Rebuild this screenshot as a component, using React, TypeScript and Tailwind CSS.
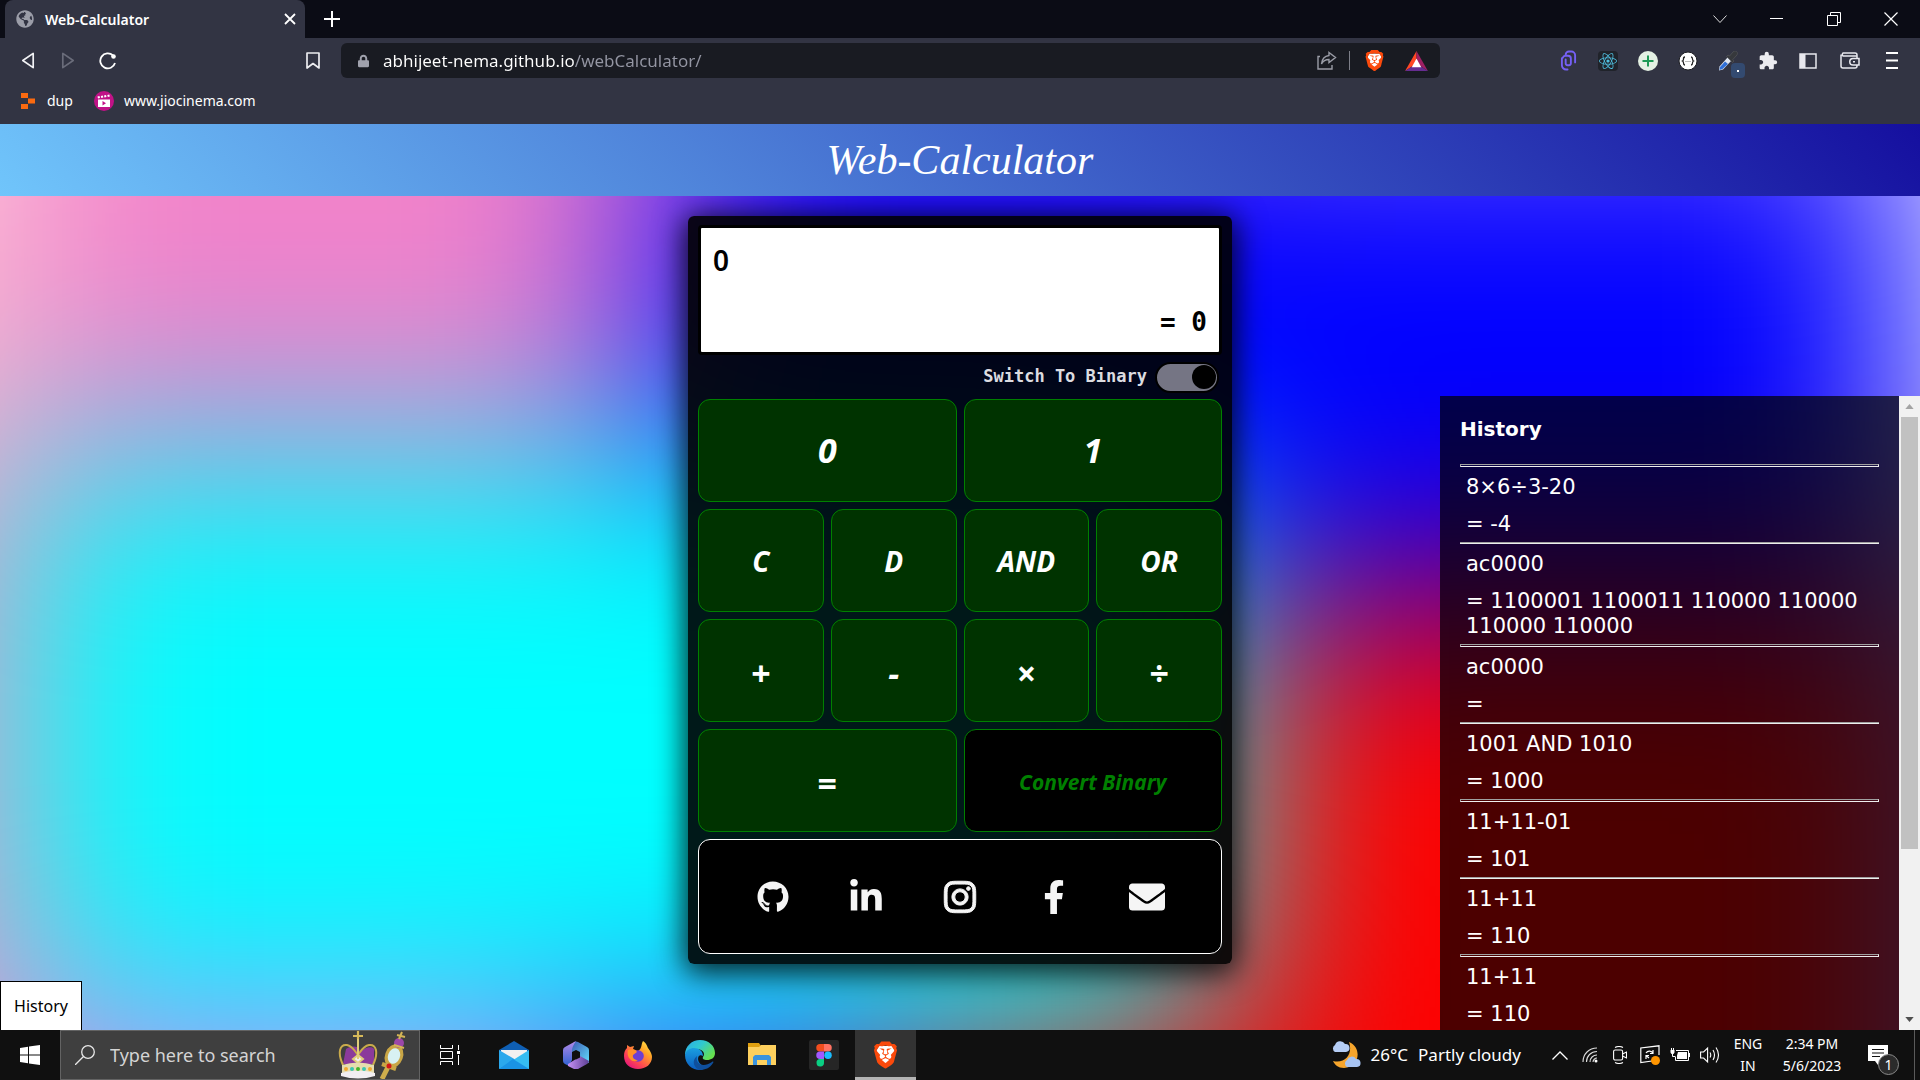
import type { ReactNode } from "react";
import { FaEnvelope, FaFacebookF, FaGithub, FaGlobeAmericas, FaInstagram, FaLinkedinIn, FaLock, FaReact } from "react-icons/fa";
import { MdExtension } from "react-icons/md";
import { SiBrave } from "react-icons/si";

const UI = "font-['Noto_Sans','Open_Sans',sans-serif]";

function IconButton({ label, className, children }: { label: string; className: string; children: ReactNode }) {
  return (
    <button type="button" aria-label={label} className={`flex shrink-0 items-center justify-center ${className}`}>
      {children}
    </button>
  );
}

function BraveLogo({ className }: { className: string }) {
  return (
    <span className={`relative flex items-center justify-center ${className}`}>
      <svg viewBox="0 0 24 24" className="absolute inset-0 h-full w-full">
        <path d="M6 4h12l2 4-3 10-5 4-5-4L4 8z" fill="#fff" />
      </svg>
      <SiBrave className="relative h-full w-full text-[#fb4a0c]" />
    </span>
  );
}

/* ---------- Browser chrome ---------- */

function TitleBar() {
  return (
    <header className="flex h-[38px] shrink-0 items-stretch bg-[#0b0c15] pl-[5px] text-white">
      <div className="flex w-[300px] items-center rounded-t-lg bg-[#323443] pl-[11px] pr-2">
        <FaGlobeAmericas className="h-[18px] w-[18px] text-[#9b9da8]" />
        <h2 className="ml-[11px] flex-1 text-[14px] font-semibold">Web-Calculator</h2>
        <IconButton label="Close tab" className="h-5 w-[14px]">
          <svg viewBox="0 0 12 12" className="h-3 w-3" stroke="#fff" strokeWidth="1.8"><path d="M1 1l10 10M11 1L1 11" /></svg>
        </IconButton>
      </div>
      <IconButton label="New tab" className="w-[54px]">
        <svg viewBox="0 0 16 16" className="h-4 w-4" stroke="#fff" strokeWidth="2"><path d="M8 0v16M0 8h16" /></svg>
      </IconButton>
      <div className="ml-auto flex pr-px">
        <IconButton label="Search tabs" className="w-[57px]">
          <svg viewBox="0 0 14 8" className="h-2 w-[14px]" fill="none" stroke="#ddd"><path d="M.5.5L7 7.500 13.500.5" /></svg>
        </IconButton>
        <IconButton label="Minimize" className="w-[57px]">
          <svg viewBox="0 0 13 2" className="h-[2px] w-[13px]"><path d="M0 0h13v1H0z" fill="#fff" /></svg>
        </IconButton>
        <IconButton label="Restore" className="w-[57px]">
          <svg viewBox="0 0 14 14" className="h-[14px] w-[14px]" fill="none" stroke="#fff"><path d="M.5 3.500h10v10H.5zM3.500 3V.5h10v10H11" /></svg>
        </IconButton>
        <IconButton label="Close" className="w-[57px]">
          <svg viewBox="0 0 14 14" className="h-[14px] w-[14px]" stroke="#fff" strokeWidth="1.200"><path d="M.5.5l13 13M13.500.5l-13 13" /></svg>
        </IconButton>
      </div>
    </header>
  );
}

function Extensions() {
  return (
    <div className="flex pr-2">
      <IconButton label="Clip extension" className="w-10">
        <svg viewBox="0 0 18 22" className="h-[21px] w-[17px]" fill="none" stroke="#7560f5" strokeWidth="2" strokeLinecap="round">
          <path d="M6 5.500V5a3.500 3.500 0 0 1 3.500-3.500H12A4 4 0 0 1 16 5.500V13M3 8a3 3 0 0 1 3-2h2.500a3 3 0 0 1 3 3v5a2 2 0 0 1-2 2h-1.500a2 2 0 0 1-2-2v-4M2 8.500v7.500a4.500 4.500 0 0 0 4.500 4.500H8" />
        </svg>
      </IconButton>
      <IconButton label="React tools" className="w-10">
        <span className="flex h-5 w-5 items-center justify-center rounded-sm bg-[#20232a]"><FaReact className="h-[18px] w-[18px] text-[#4fc0e0]" /></span>
      </IconButton>
      <IconButton label="Add extension" className="w-10">
        <svg viewBox="0 0 20 20" className="h-5 w-5"><circle cx="10" cy="10" r="10" fill="#e4f1e3" /><path d="M10 4.500v11M4.500 10h11" stroke="#1d9a55" strokeWidth="2" /></svg>
      </IconButton>
      <IconButton label="JSON viewer" className="w-10">
        <svg viewBox="0 0 20 20" className="h-5 w-5" fill="none">
          <circle cx="10" cy="10" r="9" fill="#fff" stroke="#1c1d22" />
          <path d="M7 6c-1.500 0-1.500 1-1.500 2s0 1.500-1 2c1 .5 1 1 1 2s0 2 1.500 2M13 6c1.500 0 1.500 1 1.500 2s0 1.500 1 2c-1 .5-1 1-1 2s0 2-1.500 2" stroke="#222" strokeWidth="1.300" />
          <path d="M7.500 10.500h5" stroke="#777" strokeDasharray="1 1" />
        </svg>
      </IconButton>
      <IconButton label="Colour picker" className="relative w-10">
        <svg viewBox="0 0 20 20" className="h-5 w-5">
          <path d="M1 19.500l.5-4L10 6l3.500 3.500L5 18.500z" fill="#dfe6f2" />
          <path d="M1.500 19l.5-3 5-5.500 3 2.500L4.500 18z" fill="#2f6fd8" />
          <path d="M8.500 5.500l6 6 1.500-1.500-1.200-1.500 4.200-4.500c1.500-2.500-1-5-3.500-3.500L11.500 5 10 4z" fill="#36383c" stroke="#5a5a5e" strokeWidth=".6" />
        </svg>
        <span className="absolute left-[23px] top-[25px] flex h-[15px] w-[14px] items-center justify-center rounded-sm bg-[#334a70]"><span className="h-[2px] w-[2px] bg-white" /></span>
      </IconButton>
      <IconButton label="Extensions" className="w-10"><MdExtension className="h-5 w-5 text-[#ececf0]" /></IconButton>
      <IconButton label="Sidebar" className="w-10">
        <svg viewBox="0 0 18 16" className="h-4 w-[18px]"><path d="M1 1h16v14H1z" fill="none" stroke="#e8e8ee" strokeWidth="1.500" /><path d="M1 1h5.500v14H1z" fill="#e8e8ee" /></svg>
      </IconButton>
      <IconButton label="Wallet" className="w-11">
        <svg viewBox="0 0 20 17" className="h-[17px] w-5" fill="none" stroke="#e8e8ee" strokeWidth="1.500">
          <path d="M17 4H3a2 2 0 0 1 0-3h12a2 2 0 0 1 2 2v3M1 2.500V14a2 2 0 0 0 2 2h12a2 2 0 0 0 2-2v-1M3.500 4H17M19 6.500h-6a3.200 3.200 0 0 0 0 6.500h6z" /><path d="M13 9.700h2" />
        </svg>
      </IconButton>
      <IconButton label="Menu" className="w-10">
        <svg viewBox="0 0 12 17" className="h-[17px] w-3" stroke="#fff" strokeWidth="1.800"><path d="M0 1h12M0 8.500H12M0 16h12" /></svg>
      </IconButton>
    </div>
  );
}

function Toolbar() {
  return (
    <nav className="flex h-[45px] shrink-0 items-stretch bg-[#323443] pl-2">
      <IconButton label="Back" className="w-10">
        <svg viewBox="0 0 14 18" className="h-[17px] w-[14px]" fill="none" stroke="#f2f2f5" strokeWidth="1.800" strokeLinejoin="round"><path d="M12.500 1.500v15L1.500 9z" /></svg>
      </IconButton>
      <IconButton label="Forward" className="w-10">
        <svg viewBox="0 0 14 18" className="h-[17px] w-[14px]" fill="none" stroke="#6a6c7a" strokeWidth="1.800" strokeLinejoin="round"><path d="M1.500 1.500v15L12.500 9z" /></svg>
      </IconButton>
      <IconButton label="Reload" className="w-10">
        <svg viewBox="0 0 18 18" className="h-[18px] w-[18px]" fill="none" stroke="#fff" strokeWidth="1.800">
          <path d="M14 3.500A7.500 7.500 0 1 0 16 11" /><circle cx="14.500" cy="4.500" r="2.300" fill="#fff" stroke="none" />
        </svg>
      </IconButton>
      <IconButton label="Bookmark this page" className="ml-[165px] w-10">
        <svg viewBox="0 0 14 17" className="h-[17px] w-[14px]" fill="none" stroke="#ececf0" strokeWidth="1.700" strokeLinejoin="round"><path d="M1 1h12v15l-6-4.500L1 16z" /></svg>
      </IconButton>
      <div className="my-[5px] ml-2 flex flex-1 items-center rounded-md bg-[#191b22] pl-[17px]">
        <FaLock className="h-[14px] w-[11px] text-[#a0a2ad]" />
        <input
          aria-label="Address"
          readOnly
          value="abhijeet-nema.github.io/webCalculator/"
          className="ml-[14px] min-w-0 flex-1 bg-linear-to-r from-white from-[191px] to-[#9496a3] to-[191px] bg-clip-text text-[17px] text-transparent outline-none"
        />
        <IconButton label="Share" className="w-10">
          <svg viewBox="0 0 20 19" className="h-[19px] w-5" fill="none" stroke="#9a9ca6" strokeWidth="1.400">
            <path d="M3 5.500H1v12.500h14v-4M12 1.500l6.500 5L12 11.500V8.500c-3.500 0-6 1.500-7.500 4.500.5-5 3.500-8 7.500-8.500z" />
          </svg>
        </IconButton>
        <span className="ml-[2px] h-[19px] w-px bg-[#7c7e88]" />
        <IconButton label="Brave Shields" className="ml-1 w-10"><BraveLogo className="h-[23px] w-[21px]" /></IconButton>
        <IconButton label="Brave Rewards" className="mr-[2px] w-11">
          <svg viewBox="0 0 24 21" className="h-5 w-[23px]"><path d="M12 0L0 21l12-8z" fill="#ff4724" /><path d="M12 0l12 21-12-8z" fill="#9e1f63" /><path d="M0 21h24l-12-8z" fill="#662d91" /><path d="M12 8l5 9H7z" fill="#fff" /></svg>
        </IconButton>
      </div>
      <div className="ml-[108px] flex"><Extensions /></div>
    </nav>
  );
}

function BookmarkBar() {
  return (
    <nav aria-label="Bookmarks" className="flex h-[41px] shrink-0 items-center bg-[#323443] pb-[6px] pl-[21px] text-[14px] text-white">
      <a href="#dup" className="flex items-center">
        <svg viewBox="0 0 14 16" className="h-4 w-[14px]" fill="#fb6a10"><path d="M0 0h7v5H0zM7 5.500h7v5H7zM0 11h7v5H0z" /></svg>
        <span className="ml-3">dup</span>
      </a>
      <a href="#jiocinema" className="ml-[21px] flex items-center">
        <svg viewBox="0 0 20 20" className="h-5 w-5">
          <circle cx="10" cy="10" r="10" fill="#c11287" />
          <path d="M4 8.500h12V16H4zM3.500 5.500l2-.5.5 2-2 .5zM6.800 5l2-.5.5 2-2 .5zM10 4.500l2-.5.500 2-2 .5zM13.300 4l2-.5.500 2-2 .5z" fill="#fff" />
          <path d="M8.500 10v4.500l3.500-2.200z" fill="#c11287" />
        </svg>
        <span className="ml-[10px]">www.jiocinema.com</span>
      </a>
    </nav>
  );
}

/* ---------- Web page ---------- */

function Backdrop() {
  return (
    <div aria-hidden className="absolute -inset-[320px] grid grid-cols-[330px_560fr_80fr_240fr_250fr_90fr_685fr_320px] grid-rows-[250px_325fr_45fr_95fr_435fr_320px] blur-[108px]">
      <div className="bg-[#fff0f0]" /><div className="bg-[#f48ac4]" /><div className="bg-[#f08acc]" /><div className="bg-[#9040e8]" /><div className="bg-[#9040e8]" /><div className="bg-[#9048e8]" /><div className="bg-[#a080ff]" /><div className="bg-white" />
      <div className="bg-[#ffc8d4]" /><div className="bg-[#f080cc]" /><div className="bg-[#f080cc]" /><div className="bg-[#0000ff]" /><div className="bg-[#0000ff]" /><div className="bg-[#0000ff]" /><div className="bg-[#0000ff]" /><div className="bg-white" />
      <div className="bg-[#fa90c0]" /><div className="bg-[#00ffff]" /><div className="bg-[#00ffff]" /><div className="bg-[#00ffff]" /><div className="bg-[#00ffff]" /><div className="bg-[#0000ff]" /><div className="bg-[#0000ff]" /><div className="bg-white" />
      <div className="bg-[#fa90c0]" /><div className="bg-[#00ffff]" /><div className="bg-[#00ffff]" /><div className="bg-[#00ffff]" /><div className="bg-[#00ffff]" /><div className="bg-[#00ffff]" /><div className="bg-[#0000ff]" /><div className="bg-[#e6dcff]" />
      <div className="bg-[#fa90c0]" /><div className="bg-[#00ffff]" /><div className="bg-[#00ffff]" /><div className="bg-[#00ffff]" /><div className="bg-[#00ffff]" /><div className="bg-[#00ffff]" /><div className="bg-[#ff0000]" /><div className="bg-[#a080ff]" />
      <div className="bg-[#fa90c0]" /><div className="bg-[#dc7df5]" /><div className="bg-[#503cf0]" /><div className="bg-[#503cf0]" /><div className="bg-[#c82828]" /><div className="bg-[#ff0000]" /><div className="bg-[#ff0000]" /><div className="bg-[#a080ff]" />
    </div>
  );
}

const KEYS = [
  { label: "0", style: "col-span-2 bg-[#003300] text-[34px] text-white" },
  { label: "1", style: "col-span-2 bg-[#003300] text-[34px] text-white" },
  { label: "C", style: "bg-[#003300] text-[28px] text-white" },
  { label: "D", style: "bg-[#003300] text-[28px] text-white" },
  { label: "AND", style: "bg-[#003300] text-[28px] text-white" },
  { label: "OR", style: "bg-[#003300] text-[28px] text-white" },
  { label: "+", style: "bg-[#003300] pt-[6px] text-[34px] text-white not-italic" },
  { label: "-", style: "bg-[#003300] pt-[6px] text-[34px] text-white" },
  { label: "×", style: "bg-[#003300] pt-[6px] text-[34px] text-white not-italic" },
  { label: "÷", style: "bg-[#003300] pt-[6px] text-[34px] text-white not-italic" },
  { label: "=", style: "col-span-2 bg-[#003300] pt-[6px] text-[34px] text-white not-italic" },
  { label: "Convert Binary", style: "col-span-2 bg-black pt-1 text-[21px] text-[#008000]" },
];

const SOCIALS = [
  { name: "GitHub", icon: <FaGithub className="h-8 w-8" /> },
  { name: "LinkedIn", icon: <FaLinkedinIn className="h-9 w-9" /> },
  { name: "Instagram", icon: <FaInstagram className="h-9 w-9" stroke="#f5f5f5" strokeWidth="14" /> },
  { name: "Facebook", icon: <FaFacebookF className="h-[34px] w-[34px]" /> },
  { name: "Email", icon: <FaEnvelope className="h-9 w-9" /> },
];

function Calculator() {
  return (
    <section aria-label="Calculator" className="relative mx-auto mt-5 w-[544px] rounded-md bg-black/90 px-[10px] pt-[9px] pb-[10px] shadow-[0_5px_30px_4px_rgba(0,0,0,0.85)]">
      <div className="flex h-[130px] flex-col justify-between rounded-sm border-[3px] border-black bg-white px-3 pb-[10px] pt-[12px] font-semibold text-black">
        <output className="text-[28px] leading-10">0</output>
        <output className="text-right font-['DejaVu_Sans_Mono',monospace] text-[26px] leading-10 font-bold">= 0</output>
      </div>
      <label className="flex h-[44px] items-center justify-end pr-[3px] font-['DejaVu_Sans_Mono',monospace] text-[17px] font-bold text-[#dcdce0]">
        Switch To Binary
        <input
          type="checkbox"
          defaultChecked
          className="ml-2 flex h-[31px] w-[64px] appearance-none items-center justify-end rounded-full border-2 border-black bg-[#757584] pr-px before:h-6 before:w-6 before:rounded-full before:bg-black before:content-['']"
        />
      </label>
      <div className="grid grid-cols-4 gap-[7px]">
        {KEYS.map((k) => (
          <button key={k.label} type="button" className={`h-[103px] rounded-xl border border-[#008000] font-bold italic ${k.style}`}>
            {k.label}
          </button>
        ))}
        <div className="col-span-4 flex h-[115px] items-center justify-evenly rounded-xl border border-white bg-black text-[#f5f5f5]">
          {SOCIALS.map((s) => (
            <a key={s.name} href={`#${s.name}`} aria-label={s.name} className="flex w-10 justify-center">{s.icon}</a>
          ))}
        </div>
      </div>
    </section>
  );
}

const HISTORY = [
  ["8×6÷3-20", "= -4"],
  ["ac0000", "= 1100001 1100011 110000 110000 110000 110000"],
  ["ac0000", "="],
  ["1001 AND 1010", "= 1000"],
  ["11+11-01", "= 101"],
  ["11+11", "= 110"],
  ["11+11", "= 110"],
];

function HistoryPanel() {
  return (
    <aside className="absolute bottom-0 right-0 top-[200px] flex w-[480px] bg-black/70 font-['DejaVu_Sans',Verdana,sans-serif] text-white">
      <div className="flex-1 overflow-hidden px-5">
        <h2 className="mt-[21px] mb-[22px] text-[20px] leading-[25px] font-bold">History</h2>
        <ul>
          {HISTORY.map(([expression, result], i) => (
            <li key={i} className="text-[21px] leading-[25px]">
              <hr className={i % 2 ? "h-[2px] border-t border-b border-t-[#a0a0a0] border-b-[#eeeeee]" : "h-[3px] border border-t-[#a0a0a0] border-r-[#eeeeee] border-b-[#eeeeee] border-l-[#a0a0a0]"} />
              <div className="px-[6px] pt-2 pb-[5px]">
                <p className="mb-3">{expression}</p>
                <p>{result}</p>
              </div>
            </li>
          ))}
        </ul>
      </div>
      <div aria-hidden className="flex w-[21px] flex-col items-center bg-[#f1f1f1] py-2">
        <svg viewBox="0 0 10 6" className="h-[5px] w-[9px]" fill="#a3a3a3"><path d="M5 0l5 6H0z" /></svg>
        <div className="mt-2 h-[432px] w-[17px] bg-[#c1c1c1]" />
        <svg viewBox="0 0 10 6" className="mt-auto h-[5px] w-[9px]" fill="#505050"><path d="M0 0h10L5 6z" /></svg>
      </div>
    </aside>
  );
}

/* ---------- Windows taskbar ---------- */

function Crown() {
  return (
    <svg viewBox="0 0 72 48" className="h-12 w-[72px]">
      <path d="M8 18c8-5 16-2 13 5 4-8 18-9 15-2v12H5z" fill="#8b3a9b" />
      <path d="M5 34C-1 21 2 13 9 14c6 1 8 7 11 10 3-4 5-9 11-10 7-1 10 7 4 20" fill="none" stroke="#c9aa4c" strokeWidth="2" />
      <path d="M20 8v20M15 28l5-4 5 4-5 4z" stroke="#e0cc78" strokeWidth="2" fill="#eee" />
      <path d="M20 0v8M15 5h10" stroke="#d6b95a" strokeWidth="2.200" />
      <path d="M4 34q16-5 32 0v8q-16 4-32 0z" fill="#e6dcae" />
      <path d="M3 42q17-5 34 0v3q-17 5-34 0z" fill="#f2eef2" />
      <circle cx="8" cy="38" r="2" fill="#f2a830" /><circle cx="14" cy="38" r="2" fill="#3cc5b0" /><circle cx="20" cy="38" r="2" fill="#45b427" /><circle cx="26" cy="38" r="2" fill="#3cc5b0" /><circle cx="32" cy="38" r="2" fill="#f2a830" />
      <path d="M44 48l6-12" stroke="#cfae4c" strokeWidth="5" />
      <ellipse cx="56" cy="25" rx="9" ry="12" transform="rotate(20 56 25)" fill="#c9a646" />
      <ellipse cx="56" cy="25" rx="6" ry="8" transform="rotate(20 56 25)" fill="#d8f1f3" />
      <circle cx="61" cy="12" r="5" fill="#9b47a8" /><path d="M56 14l10 3M61 8l3-7M59 4l8 2" stroke="#d4b455" strokeWidth="2" />
      <path d="M44 33l14 5" stroke="#c9a646" strokeWidth="4" /><circle cx="51" cy="35" r="2.500" fill="#d31717" />
    </svg>
  );
}

const APPS = [
  {
    name: "Mail",
    icon: (
      <svg viewBox="0 0 30 28" className="h-7 w-[30px]"><path d="M0 9L15 0l15 9v9H0z" fill="#0f5fb4" /><path d="M2 9h26v8L15 22 2 16z" fill="#f1f1f1" /><path d="M0 9l17 10L0 28z" fill="#2ba8ec" /><path d="M30 9v19H0z" fill="#35bdf2" /><path d="M0 28l14-10 16 10z" fill="#1a93e4" /></svg>
    ),
  },
  {
    name: "Microsoft 365",
    icon: (
      <svg viewBox="0 0 26 28" className="h-7 w-[26px]">
        <defs>
          <linearGradient id="m1" x1="0" y1="0" x2="0" y2="1"><stop stopColor="#b48be8" /><stop offset="1" stopColor="#2f62d2" /></linearGradient>
          <linearGradient id="m2" x1="0" y1="0" x2="1" y2="1"><stop stopColor="#3c5cb4" /><stop offset="1" stopColor="#62dcfb" /></linearGradient>
          <linearGradient id="m3" x1="0" y1="0" x2="1" y2="0"><stop stopColor="#c590f4" /><stop offset="1" stopColor="#5c3f94" /></linearGradient>
        </defs>
        <path d="M11 1q2-1 4 0l9 5q2 1 2 3v13l-9-5V11l-4-2-4 2V6q0-3 2-5z" fill="url(#m2)" />
        <path d="M13 0L2 6Q0 7 0 9v11q0 2 2 3l4 2 3-6V9q0-3 4-9z" fill="url(#m1)" />
        <path d="M5 23l8-5 4-3 9 5q0 2-2 3l-9 5q-2 1-4 0l-6-3z" fill="url(#m3)" />
        <path d="M13 9.500l4 2.300v4.600L13 18.500l-4-2.100v-4.600z" fill="#101010" />
      </svg>
    ),
  },
  {
    name: "Firefox",
    icon: (
      <svg viewBox="0 0 28 28" className="h-7 w-7">
        <defs><linearGradient id="f1" x1="1" y1="0" x2="0.200" y2="1"><stop stopColor="#fff44f" /><stop offset=".35" stopColor="#ffa527" /><stop offset=".7" stopColor="#ff4a4f" /><stop offset="1" stopColor="#e3127e" /></linearGradient></defs>
        <path d="M19 0c4 3 4 5 5 7 3 4 4 7 4 9 0 7-6 12-14 12S0 23 0 15c0-4 1-6 3-8V4l3 2 4-1-1 3 5 2c4-2 3-7 5-10z" fill="url(#f1)" />
        <circle cx="14" cy="15" r="5.800" fill="#6c3fd1" /><path d="M4 9c4-2 8 0 9 2l-4 3c-1 3 2 5 5 5-6 4-12-3-10-10z" fill="#ff9027" />
      </svg>
    ),
  },
  {
    name: "Edge",
    icon: (
      <svg viewBox="0 0 30 30" className="h-[30px] w-[30px]">
        <defs>
          <linearGradient id="e1" x1="0" y1="0" x2="1" y2=".6"><stop stopColor="#2ba8e8" /><stop offset=".5" stopColor="#30c9d0" /><stop offset="1" stopColor="#66e04e" /></linearGradient>
          <linearGradient id="e2" x1="0" y1="0" x2="0" y2="1"><stop stopColor="#1a9fe0" /><stop offset="1" stopColor="#0a5bc0" /></linearGradient>
        </defs>
        <path d="M0 15C0 6 7 0 15 0c9 0 15 6 15 13 0 5-4 7-8 7-3 0-5-1-4-3 3-4-1-8-6-8C6 9 2 12 0 15z" fill="url(#e1)" />
        <path d="M0 15c1-5 5-7 9-7 5 0 9 3 9 8-6-4-8 8 3 11-2 2-4 3-6 3C7 30 0 24 0 15z" fill="url(#e2)" />
        <path d="M12 16c-2 8 6 12 15 6 1-1 2 0 1 1-3 5-8 7-13 7-6-2-9-9-3-14z" fill="#0f4f9c" />
      </svg>
    ),
  },
  {
    name: "File Explorer",
    icon: (
      <svg viewBox="0 0 28 24" className="h-6 w-7"><path d="M0 0h11l2 3h15v19H0z" fill="#e0a010" /><path d="M0 4h11l2-2h15v20H0z" fill="#fdd05e" /><path d="M5 22v-8l2-2h14l2 2v8h-4v-5H9v5z" fill="#3a93de" /></svg>
    ),
  },
  {
    name: "Figma",
    icon: (
      <svg viewBox="0 0 30 30" className="h-[30px] w-[30px]"><rect width="30" height="30" rx="2" fill="#262626" /><path d="M11 4h4v7.500h-4a3.750 3.750 0 0 1 0-7.500z" fill="#f24e1e" /><path d="M15 4h4a3.750 3.750 0 0 1 0 7.500h-4z" fill="#ff7262" /><path d="M11 11.500h4V19h-4a3.750 3.750 0 0 1 0-7.500z" fill="#a259ff" /><circle cx="19" cy="15.250" r="3.750" fill="#1abcfe" /><path d="M11 19h4v3.500a3.750 3.750 0 1 1-4-3.500z" fill="#0acf83" /></svg>
    ),
  },
];

function Taskbar() {
  return (
    <footer className="flex h-[50px] shrink-0 items-stretch bg-[#101010] text-white">
      <IconButton label="Start" className="w-[60px]">
        <svg viewBox="0 0 20 20" className="h-5 w-5" fill="#fff"><path d="M0 3l8-1.200V9.500H0zM9 1.600L20 0v9.500H9zM0 10.500h8v7.700L0 17zM9 10.500h11V20L9 18.400z" /></svg>
      </IconButton>
      <label className="flex w-[360px] items-center border border-[#636363] bg-[#3f3f3f] pl-[14px]">
        <svg viewBox="0 0 20 20" className="h-5 w-5 shrink-0" fill="none" stroke="#e8e8e8" strokeWidth="1.300"><circle cx="13" cy="7" r="6.300" /><path d="M8.500 11.500L0 20" /></svg>
        <input aria-label="Search" placeholder="Type here to search" className="ml-[15px] min-w-0 flex-1 bg-transparent text-[18px] outline-none placeholder:text-[#d4d4d4]" />
        <span className="mr-[9px]"><Crown /></span>
      </label>
      <IconButton label="Task view" className="w-[60px]">
        <svg viewBox="0 0 21 20" className="h-5 w-[21px]" fill="none" stroke="#fff"><path d="M.5 0v3.500h12V0M.5 6.500h12v7H.5zM.5 20v-3.500h12V20M18.500 0v5M18.500 10v10" /><path d="M17 6h3v3h-3z" fill="#fff" stroke="none" /></svg>
      </IconButton>
      <div className="flex pl-[3px]">
        {APPS.map((a) => (
          <IconButton key={a.name} label={a.name} className="w-[62px]">{a.icon}</IconButton>
        ))}
      </div>
      <IconButton label="Brave" className="w-[61px] border-b-[3px] border-[#b4b4b4] bg-[#333333] pt-[3px]"><BraveLogo className="h-[30px] w-[27px]" /></IconButton>

      <div className="ml-auto flex items-stretch">
        <button type="button" className="mr-6 flex items-center text-[17px]">
          <svg viewBox="0 0 30 28" className="mr-[10px] h-7 w-[30px]">
            <path d="M18 1c14 6 10 26-5 26-6 0-9-3-11-7 13 3 20-8 16-19z" fill="#f6a52c" />
            <path d="M4 11a4 4 0 0 1 0-7 5.500 5.500 0 0 1 10-1 4 4 0 0 1 1 8z" fill="#b5cdf5" />
            <path d="M16 26a4 4 0 0 1 0-7 5 5 0 0 1 9-1 4 4 0 0 1 1 8z" fill="#a6c3f2" />
          </svg>
          <span>26°C</span>
          <span className="ml-[10px]">Partly cloudy</span>
        </button>
        <IconButton label="Show hidden icons" className="w-[30px]">
          <svg viewBox="0 0 16 9" className="h-[9px] w-4" fill="none" stroke="#fff" strokeWidth="1.300"><path d="M.5 8.500L8 1l7.500 7.500" /></svg>
        </IconButton>
        <IconButton label="Network" className="w-[30px]">
          <svg viewBox="0 0 16 16" className="h-4 w-4" fill="none" stroke="#ddd" strokeWidth="1.100"><path d="M1 15C1 7 7 1 15 1M4.500 15C4.500 9 9 4.500 15 4.500M8 15c0-4 3-7 7-7M11 15c0-2 2-4 4-4" /><circle cx="14" cy="14" r="1.500" fill="#fff" stroke="none" /></svg>
        </IconButton>
        <IconButton label="Meet Now" className="w-[30px]">
          <svg viewBox="0 0 14 18" className="h-[18px] w-[14px]" fill="none" stroke="#fff" strokeWidth="1.100"><rect x=".6" y="4" width="9" height="10" rx="1.500" /><path d="M9.500 8l4-2v6l-4-2M2 1.500q4-2 8 0M2 16.500q4 2 8 0" /></svg>
        </IconButton>
        <IconButton label="Update" className="w-[30px]">
          <svg viewBox="0 0 20 20" className="h-5 w-5" fill="none" stroke="#fff" strokeWidth="1.200"><path d="M12 16L.8 17.500V3L19 .8V10M13 8.500A4 4 0 0 0 6 8M13 5v3.500h-3M6 14v-3.500h3M6 10.500l3 2.500" /><circle cx="15.500" cy="15.500" r="4.500" fill="#ff9500" stroke="none" /></svg>
        </IconButton>
        <IconButton label="Battery" className="w-[30px]">
          <svg viewBox="0 0 20 14" className="h-[14px] w-5" fill="none" stroke="#fff"><path d="M6 2.500h12.500v10h-13V9" /><path d="M8 4h9v7H7V7.500zM18.500 5H20v4h-1.500zM.5 2h4v2.500l-1 1.500h-2L.5 4.500z" fill="#fff" stroke="none" /><path d="M1.500 0v2M3.500 0v2M2.500 6v2.500h3" /></svg>
        </IconButton>
        <IconButton label="Volume" className="w-[30px]">
          <svg viewBox="0 0 20 18" className="h-[18px] w-5" fill="none" stroke="#fff" strokeWidth="1.100"><path d="M.6 6h3l4-4v14l-4-4h-3zM10 6.500q1.500 2.500 0 5M13 4q3 5 0 10M16 1.500q5 7.500 0 15" /></svg>
        </IconButton>
        <button type="button" className="w-[46px] text-center text-[14px] leading-[22px]">ENG<br />IN</button>
        <button type="button" className="w-[82px] text-center text-[14px] leading-[22px]">2:34 PM<br />5/6/2023</button>
        <IconButton label="Notifications" className="relative w-[50px]">
          <svg viewBox="0 0 20 20" className="h-5 w-5"><path d="M0 0h20v16h-6l-4 4-3-4H0z" fill="#fff" /><path d="M4 4.500h12M4 8h12M4 11.500h8" stroke="#111" /></svg>
          <span className="absolute bottom-[5px] left-[25px] flex h-[21px] w-[21px] items-center justify-center rounded-full border border-[#8a8a8a] bg-[#2b2b2b] text-[14px]">1</span>
        </IconButton>
        <button type="button" aria-label="Show desktop" className="ml-[11px] w-[6px] border-l border-[#5a5a5a]" />
      </div>
    </footer>
  );
}

export default function App() {
  return (
    <div className={`flex h-screen flex-col overflow-hidden ${UI}`}>
      <TitleBar />
      <Toolbar />
      <BookmarkBar />
      <h1 className="flex h-[72px] shrink-0 items-center justify-center bg-[linear-gradient(45deg,#70c5fb,#150f9f)] font-['Liberation_Serif',serif] text-[42px] text-white italic">
        Web-Calculator
      </h1>
      <main className="relative min-h-0 flex-1 overflow-hidden">
        <Backdrop />
        <Calculator />
        <HistoryPanel />
        <button type="button" className="absolute bottom-0 left-0 h-[49px] w-[82px] border border-b-0 border-black bg-white text-[16px] text-black">History</button>
      </main>
      <Taskbar />
    </div>
  );
}
